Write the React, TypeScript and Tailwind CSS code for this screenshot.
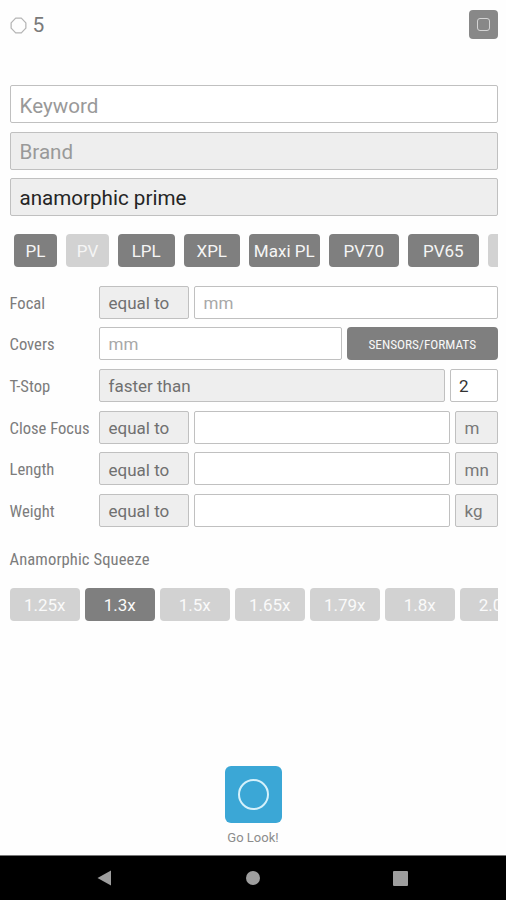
import React, { useState } from "react";
import { clsx } from "clsx";

type Chip = { label: string; width: string };

const mounts: Chip[] = [
  { label: "PL", width: "w-[43px]" },
  { label: "PV", width: "w-[43px]" },
  { label: "LPL", width: "w-[56.5px]" },
  { label: "XPL", width: "w-[56.5px]" },
  { label: "Maxi PL", width: "w-[70.5px]" },
  { label: "PV70", width: "w-[70.5px]" },
  { label: "PV65", width: "w-[70.5px]" },
  { label: "", width: "w-[70.5px]" },
];

const squeezes = ["1.25x", "1.3x", "1.5x", "1.65x", "1.79x", "1.8x", "2.0x"];

const Box = ({
  children,
  className,
}: {
  children?: React.ReactNode;
  className?: string;
}) => (
  <div
    className={clsx(
      "flex h-full items-center overflow-hidden rounded-[2px] border-[1.5px] border-[#c0c0c0] whitespace-nowrap",
      className
    )}
  >
    {children}
  </div>
);

const Row = ({
  label,
  children,
}: {
  label: string;
  children: React.ReactNode;
}) => (
  <div className="flex h-[33px] items-center">
    <div className="w-[89px] shrink-0 whitespace-nowrap pt-[4px] text-[16.6px] text-[#7c7c7c] font-['Roboto_Condensed','Roboto',sans-serif] [font-stretch:75%]">
      {label}
    </div>
    <div className="flex h-full min-w-0 flex-1 gap-[5px] text-[17px]">
      {children}
    </div>
  </div>
);

const Operator = () => (
  <Box className="w-[90px] shrink-0 bg-[#eeeeee] pt-[3px] pl-[9px] text-[#707070]">
    equal to
  </Box>
);

const Unit = ({ children }: { children: React.ReactNode }) => (
  <Box className="w-[43px] shrink-0 bg-[#eeeeee] pt-[3px] pl-[9px] text-[#787878]">
    {children}
  </Box>
);

const App = () => {
  const [activeMounts, setActiveMounts] = useState([
    "PL",
    "LPL",
    "XPL",
    "Maxi PL",
    "PV70",
    "PV65",
  ]);
  const [squeeze, setSqueeze] = useState("1.3x");

  const toggleMount = (label: string) => {
    setActiveMounts((prev) =>
      prev.includes(label) ? prev.filter((m) => m !== label) : [...prev, label]
    );
  };

  return (
    <div className="flex h-[900px] w-[506px] flex-col overflow-hidden bg-[#fefefe] font-['Roboto',sans-serif]">
      <main className="flex flex-1 flex-col pt-[9px] pr-[8.5px] pl-[9.5px]">
        <header className="flex h-[30px] items-center justify-between">
          <div className="flex items-center pt-[3px]">
            <svg width="17" height="17" viewBox="0 0 18 18" fill="none">
              <path
                d="M6 1.2h6l4.8 5v5.6l-4.8 5H6l-4.8-5V6.2z"
                stroke="#b4b4b4"
                strokeWidth="1.3"
                strokeLinejoin="round"
              />
            </svg>
            <span className="ml-[6px] text-[21px] leading-none text-[#7a7a7a]">
              5
            </span>
          </div>
          <button className="flex size-[29px] items-center justify-center rounded-[4px] bg-[#888888]">
            <span className="size-[13px] rounded-[3px] border-[1.5px] border-[#d4d4d4]" />
          </button>
        </header>

        <div className="mt-[46px] flex flex-col gap-[8.5px] text-[20.6px] text-[#999999]">
          <div className="h-[38px]">
            <Box className="bg-white pt-[4px] pl-[9px]">Keyword</Box>
          </div>
          <div className="h-[38px]">
            <Box className="bg-[#eeeeee] pt-[3px] pl-[9px]">Brand</Box>
          </div>
          <div className="h-[38px]">
            <Box className="bg-[#eeeeee] pt-[3px] pl-[9px] text-[#252525]">
              anamorphic prime
            </Box>
          </div>
        </div>

        <div className="mt-[18px] flex gap-[9px] overflow-hidden pl-[4.5px] text-[17px]">
          {mounts.map((mount) => (
            <button
              key={mount.label}
              onClick={() => toggleMount(mount.label)}
              className={clsx(
                "h-[33px] shrink-0 rounded-[4px] pt-[2px] whitespace-nowrap text-[#f5f5f5]",
                mount.width,
                activeMounts.includes(mount.label)
                  ? "bg-[#7f7f7f]"
                  : "bg-[#d2d2d2]"
              )}
            >
              {mount.label}
            </button>
          ))}
        </div>

        <div className="mt-[18.5px] flex flex-col gap-[8.7px]">
          <Row label="Focal">
            <Operator />
            <Box className="flex-1 bg-white pt-[3px] pl-[9px] text-[#a8a8a8]">
              mm
            </Box>
          </Row>
          <Row label="Covers">
            <Box className="flex-1 bg-white pt-[3px] pl-[9px] text-[#a8a8a8]">
              mm
            </Box>
            <button className="w-[150.5px] rounded-[4px] bg-[#7f7f7f] pt-[2px] text-[13.3px] text-[#f8f8f8] font-['Roboto_Condensed','Roboto',sans-serif] [font-stretch:75%]">
              SENSORS/FORMATS
            </button>
          </Row>
          <Row label="T-Stop">
            <Box className="flex-1 bg-[#eeeeee] pt-[2px] pl-[9px] text-[#707070]">
              faster than
            </Box>
            <Box className="w-[47.5px] bg-white pt-[2px] pl-[8px] text-[#333333]">
              2
            </Box>
          </Row>
          {[
            ["Close Focus", "m"],
            ["Length", "mn"],
            ["Weight", "kg"],
          ].map(([label, unit]) => (
            <Row key={label} label={label}>
              <Operator />
              <Box className="flex-1 bg-white" />
              <Unit>{unit}</Unit>
            </Row>
          ))}
        </div>

        <div className="mt-[20px] h-6 text-[16.6px] leading-[25px] tracking-[0.1px] text-[#7c7c7c] font-['Roboto_Condensed','Roboto',sans-serif] [font-stretch:75%]">
          Anamorphic Squeeze
        </div>
        <div className="mt-[17px] flex gap-[4.5px] overflow-hidden text-[17px]">
          {squeezes.map((value) => (
            <button
              key={value}
              onClick={() => setSqueeze(value)}
              className={clsx(
                "h-[33px] w-[70.5px] shrink-0 rounded-[4px] pt-[2px] text-[#fafafa]",
                squeeze === value ? "bg-[#7f7f7f]" : "bg-[#d2d2d2]"
              )}
            >
              {value}
            </button>
          ))}
        </div>

        <div className="mt-auto flex flex-col items-center pr-[1px] pb-[9px]">
          <button className="flex size-[57px] items-center justify-center rounded-[6px] bg-[#3ba7d6]">
            <span className="size-[31px] rounded-full border-2 border-[#d5f1fb]" />
          </button>
          <span className="mt-[7px] text-[13px] leading-4 text-[#8c8c8c]">
            Go Look!
          </span>
        </div>
      </main>

      <nav className="flex h-[45px] shrink-0 items-center justify-between border-t border-[#777777] bg-black pr-[98px] pl-[97px]">
        <svg width="15" height="16" viewBox="0 0 15 16">
          <path d="M14 0.5v15L0.5 8z" fill="#9e9e9e" />
        </svg>
        <span className="size-[14px] rounded-full bg-[#9e9e9e]" />
        <span className="size-[15px] rounded-[1px] bg-[#9e9e9e]" />
      </nav>
    </div>
  );
};

export default App;
